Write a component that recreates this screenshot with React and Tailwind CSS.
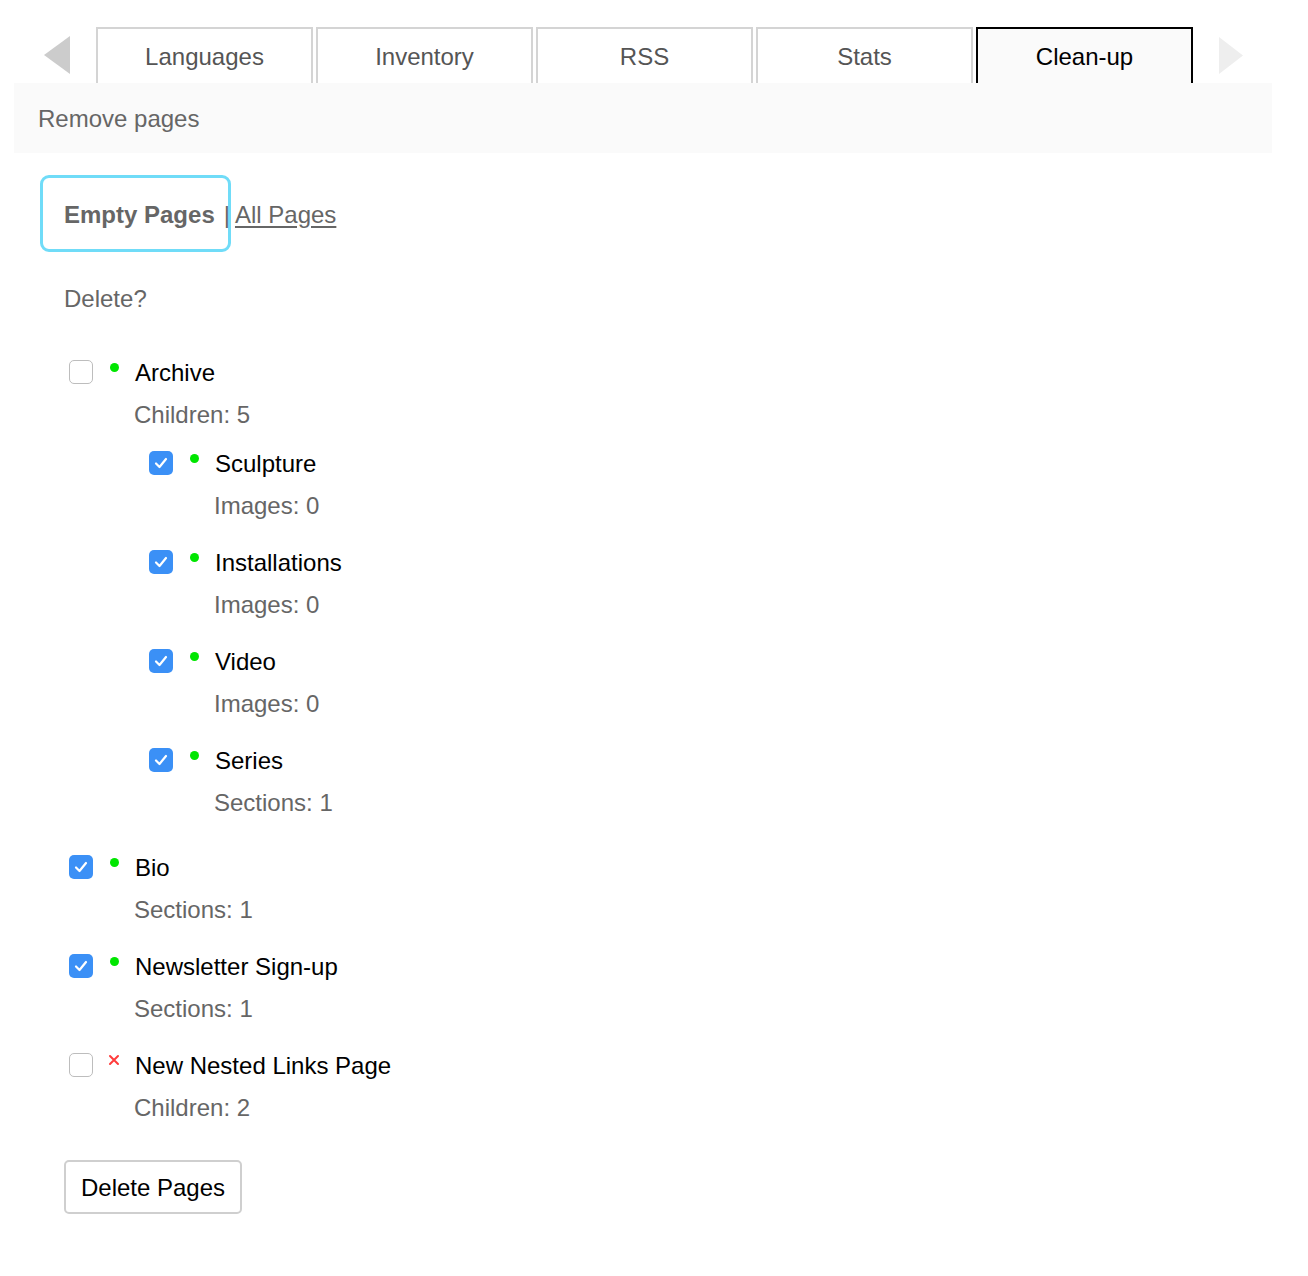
import { useState } from "react";

const tabs = ["Languages", "Inventory", "RSS", "Stats", "Clean-up"];

const pages = [
  {
    name: "Archive",
    meta: "Children: 5",
    checked: false,
    status: "ok",
    children: [
      { name: "Sculpture", meta: "Images: 0", checked: true, status: "ok" },
      { name: "Installations", meta: "Images: 0", checked: true, status: "ok" },
      { name: "Video", meta: "Images: 0", checked: true, status: "ok" },
      { name: "Series", meta: "Sections: 1", checked: true, status: "ok" },
    ],
  },
  { name: "Bio", meta: "Sections: 1", checked: true, status: "ok" },
  { name: "Newsletter Sign-up", meta: "Sections: 1", checked: true, status: "ok" },
  { name: "New Nested Links Page", meta: "Children: 2", checked: false, status: "off" },
];

function Checkbox({ checked }) {
  if (checked) {
    return (
      <span className="w-[24px] h-[24px] rounded-[5px] bg-[#3b90f6] flex items-center justify-center shrink-0">
        <svg width="14" height="12" viewBox="0 0 14 12" fill="none">
          <path d="M2 6.5 L5.5 10 L12 2" stroke="white" strokeWidth="2.2" strokeLinecap="round" strokeLinejoin="round" />
        </svg>
      </span>
    );
  }
  return <span className="block w-[24px] h-[24px] rounded-[5px] border-[1.5px] border-[#bdbdbd] bg-white shrink-0" />;
}

function Status({ status }) {
  if (status === "ok") {
    return <span className="w-[9px] h-[9px] rounded-full bg-[#00e600] mb-[10px]" />;
  }
  return (
    <svg width="12" height="12" viewBox="0 0 12 12" className="mb-[10px]">
      <path d="M2 2 L10 10 M10 2 L2 10" stroke="#ff3b3b" strokeWidth="2" strokeLinecap="round" />
    </svg>
  );
}

function PageItem({ page }) {
  return (
    <div>
      <div className="flex items-center h-[42px]">
        <span className="ml-[5px] w-[24px] shrink-0">
          <Checkbox checked={page.checked} />
        </span>
        <span className="w-[42px] flex justify-center shrink-0">
          <Status status={page.status} />
        </span>
        <span className="text-black pt-[2px]">{page.name}</span>
      </div>
      <div className="h-[42px] flex items-center pl-[70px] pt-[2px] text-[#666]">{page.meta}</div>
      {page.children && (
        <div className="flex flex-col gap-[15px] pl-[80px] mt-[7px] mb-[8px]">
          {page.children.map((c) => (
            <PageItem key={c.name} page={c} />
          ))}
        </div>
      )}
    </div>
  );
}

export default function App() {
  const [active] = useState("Clean-up");

  return (
    <div className="min-h-[1276px] bg-white pt-[27px] text-[24px]" style={{ fontFamily: '"Liberation Sans", Arial, sans-serif' }}>
      <div className="flex items-center h-[56px] pl-[44px]">
        <svg width="26" height="38" viewBox="0 0 26 38" className="mr-[26px]">
          <polygon points="26,0 26,38 0,19" fill="#cccccc" />
        </svg>
        <div className="flex gap-[3px] h-full">
          {tabs.map((t) => (
            <div
              key={t}
              className={
                t === active
                  ? "w-[217px] h-full border-2 border-b-0 border-black bg-[#fafafa] text-black flex items-center justify-center pt-[2px]"
                  : "w-[217px] h-full border-2 border-b-0 border-[#d4d4d4] bg-white text-[#555] flex items-center justify-center pt-[2px]"
              }
            >
              {t}
            </div>
          ))}
        </div>
        <svg width="24" height="37" viewBox="0 0 24 37" className="ml-[26px]">
          <polygon points="0,0 0,37 24,18.5" fill="#eeeeee" />
        </svg>
      </div>

      <div className="ml-[14px] w-[1258px] h-[70px] bg-[#fafafa] flex items-center pl-[24px] pt-[2px] text-[#666]">
        Remove pages
      </div>

      <div className="ml-[14px] pl-[26px]">
        <div className="flex items-center mt-[22px] text-[#666]">
          <span className="h-[77px] rounded-[9px] border-[3px] border-[#70dcf8] pl-[21px] pr-[13px] pt-[2px] flex items-center font-bold">
            Empty Pages
          </span>
          <span className="ml-[-7px] pt-[2px]">|</span>
          <a href="#" className="ml-[5px] pt-[2px] underline underline-offset-[3px] text-[#666]">
            All Pages
          </a>
        </div>

        <div className="pl-[24px]">
          <div className="h-[42px] flex items-center mt-[25px] pt-[2px] text-[#666]">Delete?</div>

          <div className="flex flex-col gap-[15px] mt-[32px]">
            {pages.map((p) => (
              <PageItem key={p.name} page={p} />
            ))}
          </div>

          <button className="mt-[32px] w-[178px] h-[54px] border-2 border-[#cfcfcf] rounded-[5px] bg-white text-black flex items-center justify-center pt-[2px]">
            Delete Pages
          </button>
        </div>
      </div>
    </div>
  );
}
